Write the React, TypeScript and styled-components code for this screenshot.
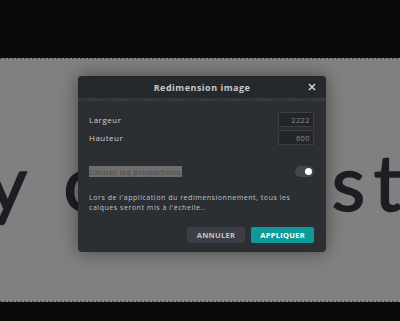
import styled, { createGlobalStyle } from "styled-components";

const GlobalStyle = createGlobalStyle`
  html, body {
    margin: 0;
    padding: 0;
    background: #0a0a0a;
    font-family: "Open Sans", "Noto Sans", sans-serif;
  }
`;

const Page = styled.div`
  position: relative;
  width: 400px;
  height: 321px;
  overflow: hidden;
  background: #0a0a0a;
  display: flex;
  flex-direction: column;
`;

const TopBar = styled.div`
  height: 58px;
  flex-shrink: 0;
`;

const Canvas = styled.div`
  height: 244px;
  flex-shrink: 0;
  background: #808080;
  display: flex;
  align-items: flex-start;
  overflow: hidden;
  background-image:
    repeating-linear-gradient(90deg, #4a4a4a 0 2px, #9a9a9a 2px 4px),
    repeating-linear-gradient(90deg, #4a4a4a 0 2px, #9a9a9a 2px 4px);
  background-size: 100% 1px, 100% 1px;
  background-position: top, bottom;
  background-repeat: no-repeat;
`;

const BigText = styled.div`
  font-family: Lato, "Open Sans", sans-serif;
  font-size: 78px;
  font-weight: 400;
  -webkit-text-stroke: 1.5px #1d1e23;
  line-height: 1;
  color: #1d1e23;
  letter-spacing: 8px;
  word-spacing: 17px;
  white-space: nowrap;
  margin-left: -13px;
  margin-top: 84px;
`;

const Lead = styled.span`
  margin-right: 28px;
`;

const Dialog = styled.div`
  position: absolute;
  left: 78px;
  top: 76px;
  width: 248px;
  height: 176px;
  background: #2b2e33;
  border-radius: 4px;
  box-shadow: 0 0 18px rgba(0, 0, 0, 0.45);
  display: flex;
  flex-direction: column;
  overflow: hidden;
`;

const Header = styled.div`
  height: 22px;
  background: #25282c;
  display: flex;
  align-items: center;
  justify-content: center;
  position: relative;
  border-bottom: 3px solid transparent;
  border-image: repeating-linear-gradient(45deg, #2f3237 0 1px, #3a3d42 1px 2px) 3;
`;

const Title = styled.span`
  font-size: 9px;
  font-weight: 700;
  letter-spacing: 0.5px;
  color: #c9c9c9;
`;

const Close = styled.span`
  position: absolute;
  right: 10px;
  top: 7px;
  width: 8px;
  height: 8px;
  display: flex;
`;

const Body = styled.div`
  flex: 1;
  padding: 11px 11px 9px 11px;
  display: flex;
  flex-direction: column;
`;

const Row = styled.div`
  display: flex;
  align-items: center;
  justify-content: space-between;
  height: 15px;
  margin-bottom: 3px;
`;

const Label = styled.span`
  font-size: 8px;
  letter-spacing: 0.5px;
  color: #d0d0d0;
`;

const NumberInput = styled.div`
  width: 36px;
  height: 15px;
  box-sizing: border-box;
  background: #232529;
  border: 1px solid #3c3f44;
  color: #8e8e8e;
  font-size: 7.5px;
  letter-spacing: 0.4px;
  display: flex;
  align-items: center;
  justify-content: flex-end;
  padding-right: 3px;
  margin-right: 1px;
`;

const ToggleRow = styled(Row)`
  margin-top: 17px;
  margin-bottom: 0;
  height: 12px;
`;

const Selected = styled.span`
  font-size: 8px;
  letter-spacing: 0.3px;
  color: #4a4b4d;
  background: #6e6e6e;
  line-height: 11px;
  padding-right: 1px;
`;

const Toggle = styled.div<{ $on: boolean }>`
  width: 19px;
  height: 11px;
  border-radius: 6px;
  background: #44474c;
  display: flex;
  align-items: center;
  justify-content: ${(p) => (p.$on ? "flex-end" : "flex-start")};
  padding: 0 2px;
  box-sizing: border-box;
  margin-right: 1px;
`;

const Knob = styled.div`
  width: 7px;
  height: 7px;
  border-radius: 50%;
  background: #ffffff;
`;

const Note = styled.p`
  margin: 16px 0 0 0;
  font-size: 7px;
  line-height: 10px;
  letter-spacing: 0.55px;
  color: #c2c2c2;
`;

const Actions = styled.div`
  margin-top: auto;
  display: flex;
  justify-content: flex-end;
  gap: 6px;
  padding-right: 1px;
`;

const Button = styled.button<{ $primary?: boolean }>`
  height: 16px;
  padding: 0 ${(p) => (p.$primary ? "9px" : "10px")};
  border: none;
  border-radius: 2px;
  font-family: "Open Sans", sans-serif;
  font-size: 7.5px;
  font-weight: 700;
  letter-spacing: 0.3px;
  background: ${(p) => (p.$primary ? "#0f9a9a" : "#3b3e44")};
  color: ${(p) => (p.$primary ? "#ffffff" : "#c4c4c4")};
`;

export default function App() {
  return (
    <>
      <GlobalStyle />
      <Page>
        <TopBar />
        <Canvas>
          <BigText>
            <Lead>y</Lead>our test
          </BigText>
        </Canvas>
        <Dialog>
          <Header>
            <Title>Redimension image</Title>
            <Close>
              <svg width="8" height="8" viewBox="0 0 8 8">
                <path d="M1 1L7 7M7 1L1 7" stroke="#d0d0d0" strokeWidth="1.6" />
              </svg>
            </Close>
          </Header>
          <Body>
            <Row>
              <Label>Largeur</Label>
              <NumberInput>2222</NumberInput>
            </Row>
            <Row>
              <Label>Hauteur</Label>
              <NumberInput>600</NumberInput>
            </Row>
            <ToggleRow>
              <Selected>Limiter les proportions</Selected>
              <Toggle $on>
                <Knob />
              </Toggle>
            </ToggleRow>
            <Note>
              Lors de l'application du redimensionnement, tous les calques seront mis à
              l'échelle..
            </Note>
            <Actions>
              <Button>ANNULER</Button>
              <Button $primary>APPLIQUER</Button>
            </Actions>
          </Body>
        </Dialog>
      </Page>
    </>
  );
}
